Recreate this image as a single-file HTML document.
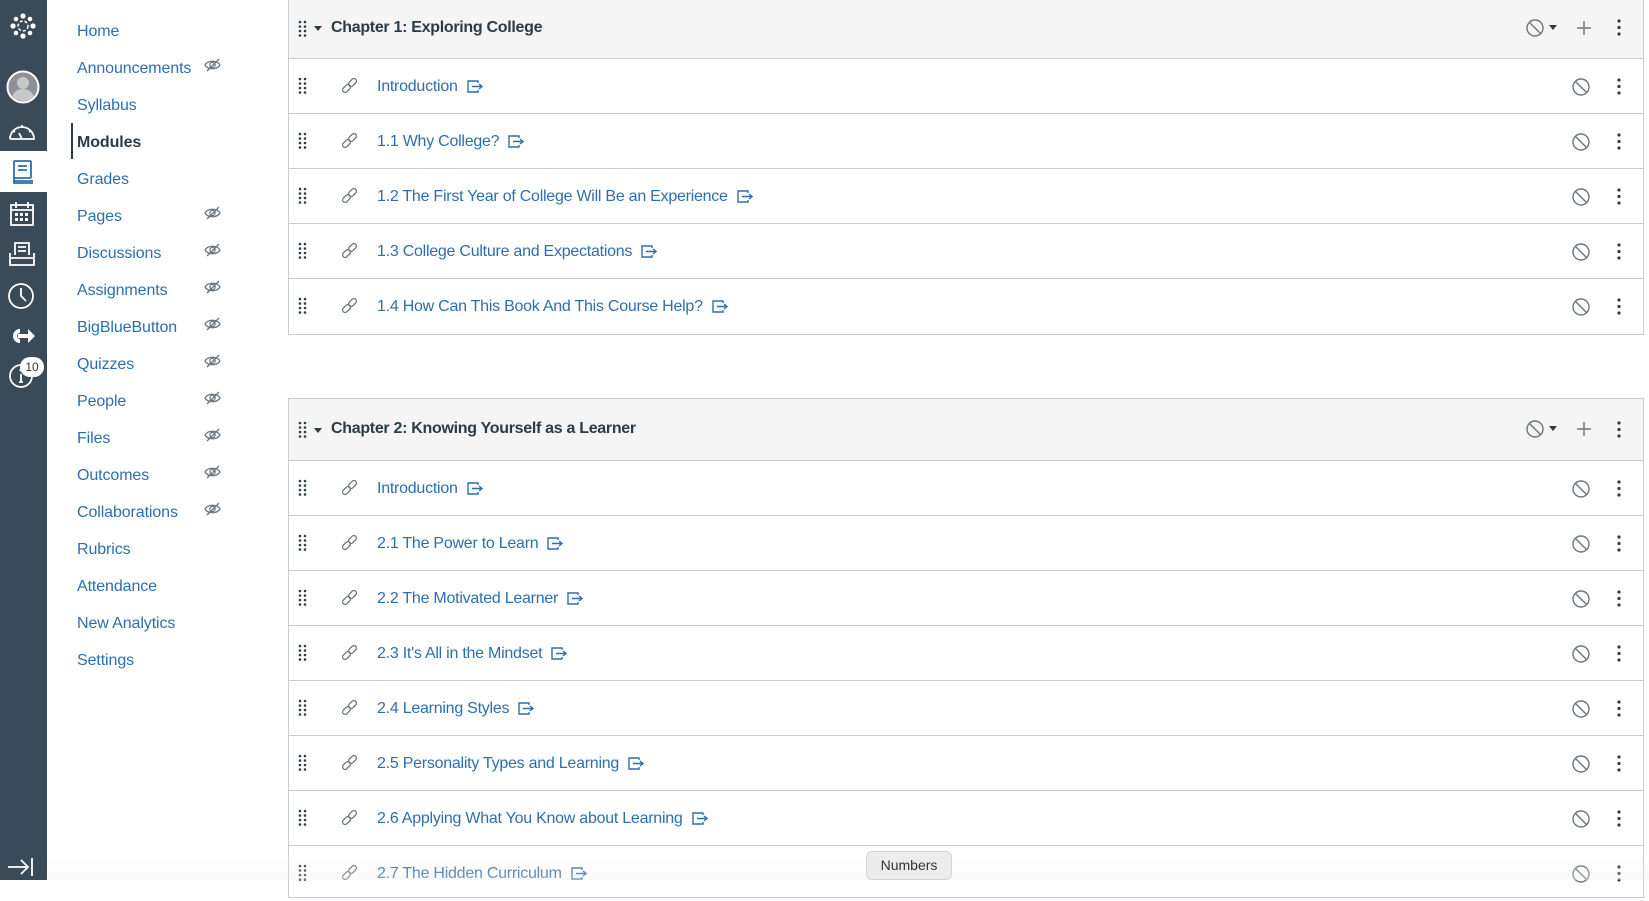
<!DOCTYPE html>
<html><head><meta charset="utf-8"><style>
*{margin:0;padding:0;box-sizing:border-box}
body{width:1649px;height:880px;overflow:hidden;background:#fff;font-family:"Liberation Sans",sans-serif;position:relative}
#gn{position:absolute;left:0;top:0;width:47px;height:880px;background:#394b58}
#gn .act{position:absolute;left:0;top:151px;width:47px;height:41px;background:#fff}
#gn svg{position:absolute}
.nav a{position:absolute;left:77px;font-size:16px;color:#2d6fad;text-decoration:none;white-space:nowrap;letter-spacing:-0.1px}
.nav .eye{position:absolute;left:204px}
.nav .cur{color:#2d3b45;font-weight:bold}
.bar{position:absolute;left:71px;top:123px;width:2px;height:36px;background:#2d3b45}
.box{position:absolute;left:288px;width:1356px;border:1px solid #c7cdd1;border-top:none}
.hd{height:59px;background:#f5f5f5;border-bottom:1px solid #c7cdd1;position:relative}
.hd .t{position:absolute;left:42px;top:19px;font-size:16px;color:#2d3b45;font-weight:bold;letter-spacing:-0.3px}
.row{height:55px;border-bottom:1px solid #c7cdd1;position:relative}
.row:last-child{border-bottom:none}
.row .t{position:absolute;left:88px;top:19px;font-size:16px;color:#2d6fad;white-space:nowrap;letter-spacing:-0.25px}
.row .t svg{vertical-align:-3px;margin-left:8px}
.dr{position:absolute;left:9px;top:18px}
.hd .dr{top:20px}
.lk{position:absolute;left:51px;top:18px}
.ban{position:absolute;left:1282px;top:18px}
.keb{position:absolute;left:1328px;top:18px}
.caret{position:absolute;left:25px;top:26px;width:0;height:0;border-left:4px solid transparent;border-right:4px solid transparent;border-top:5px solid #2d3b45}
</style></head><body>
<svg width="0" height="0" style="position:absolute"><defs>
<g id="drag"><g fill="#2d3b45"><circle cx="2" cy="2" r="1.3"/><circle cx="7" cy="2" r="1.3"/><circle cx="2" cy="6.5" r="1.3"/><circle cx="7" cy="6.5" r="1.3"/><circle cx="2" cy="11" r="1.3"/><circle cx="7" cy="11" r="1.3"/><circle cx="2" cy="15.5" r="1.3"/><circle cx="7" cy="15.5" r="1.3"/></g></g>
<g id="link"><g fill="none" stroke="#6b7780" stroke-width="1.3"><rect x="2" y="9" width="9" height="5" rx="2.5" transform="rotate(-45 6.5 11.5)"/><rect x="8" y="3" width="9" height="5" rx="2.5" transform="rotate(-45 12.5 5.5)"/></g></g>
<g id="ext"><g fill="none" stroke="#2d6fad" stroke-width="1.4"><path d="M12 4V2H2v11h10v-2"/><path d="M6 7.5h10M13 5l3 2.5-3 2.5"/></g></g>
<g id="ban"><g fill="none" stroke="#6b7780" stroke-width="1.4"><circle cx="10" cy="10" r="8"/><path d="M4.5 4.5l11 11"/></g></g>
<g id="keb"><g fill="#2d3b45"><circle cx="2" cy="3" r="1.6"/><circle cx="2" cy="9.5" r="1.6"/><circle cx="2" cy="16" r="1.6"/></g></g>
<g id="eye"><g fill="none" stroke="#6b7780" stroke-width="1.3"><path d="M1 7c3-5 12-5 15 0c-3 5-12 5-15 0z"/><circle cx="8.5" cy="7" r="2.6"/><path d="M3 13L15 1"/></g></g>
</defs></svg>

<div id="gn">
<div class="act"></div>
<svg style="left:9px;top:12px" width="28" height="28" viewBox="0 0 28 28"><g fill="#fff"><circle cx="14" cy="4" r="2.6"/><circle cx="14" cy="24" r="2.6"/><circle cx="4" cy="14" r="2.6"/><circle cx="24" cy="14" r="2.6"/><circle cx="7" cy="7" r="2.3"/><circle cx="21" cy="7" r="2.3"/><circle cx="7" cy="21" r="2.3"/><circle cx="21" cy="21" r="2.3"/></g><circle cx="14" cy="14" r="5" fill="none" stroke="#fff" stroke-width="1.5" stroke-dasharray="3 2"/></svg>
<svg style="left:6px;top:70px" width="34" height="34" viewBox="0 0 34 34"><circle cx="17" cy="17" r="15.5" fill="#8c9297" stroke="#fff" stroke-width="2"/><circle cx="17" cy="13" r="6" fill="#c8c8c8"/><path d="M6 27c2-6 6-8 11-8s9 2 11 8c-3 3-7 4-11 4s-8-1-11-4z" fill="#c8c8c8"/></svg>
<svg style="left:7px;top:120px" width="30" height="22" viewBox="0 0 30 22"><g fill="none" stroke="#fff" stroke-width="1.8"><path d="M3 19A12 12 0 1 1 27 19H3"/><path d="M15 19l-3-6M6 11l2 1M24 11l-2 1M15 5v2"/></g></svg>
<svg style="left:11px;top:159px" width="24" height="26" viewBox="0 0 24 26"><g fill="none" stroke="#2d6fad" stroke-width="1.8"><rect x="3" y="2" width="17" height="17" rx="1"/><path d="M7 7h9M7 11h9M2 22h20M3 19v5h19"/></g></svg>
<svg style="left:9px;top:201px" width="26" height="26" viewBox="0 0 26 26"><g fill="none" stroke="#fff" stroke-width="1.8"><rect x="2" y="4" width="22" height="20"/><path d="M2 9h22M7 1v6M19 1v6"/></g><g fill="#fff"><rect x="6" y="12" width="3" height="3"/><rect x="11" y="12" width="3" height="3"/><rect x="16" y="12" width="3" height="3"/><rect x="6" y="17" width="3" height="3"/><rect x="11" y="17" width="3" height="3"/><rect x="16" y="17" width="3" height="3"/></g></svg>
<svg style="left:8px;top:241px" width="28" height="26" viewBox="0 0 28 26"><g fill="none" stroke="#fff" stroke-width="1.8"><path d="M7 14V2h14v12M10 6h8M10 10h8"/><path d="M2 12v12h24V12M2 17h24"/></g></svg>
<svg style="left:7px;top:282px" width="28" height="28" viewBox="0 0 28 28"><g fill="none" stroke="#fff" stroke-width="1.8"><circle cx="14" cy="14" r="12"/><path d="M14 6v8l5 5"/></g></svg>
<svg style="left:8px;top:325px" width="28" height="22" viewBox="0 0 28 22"><g fill="#fff"><path d="M12 4a7 7 0 1 0 0 14v-4a3 3 0 1 1 0-6z"/><path d="M10 9h10V4l7 7-7 7v-5H10z"/></g></svg>
<svg style="left:8px;top:363px" width="26" height="26" viewBox="0 0 26 26"><g fill="none" stroke="#fff" stroke-width="1.8"><circle cx="13" cy="13" r="11"/><path d="M13 11v8M11 19h4"/></g><circle cx="13" cy="7" r="1.5" fill="#fff"/></svg>
<div style="position:absolute;left:20px;top:357px;width:24px;height:20px;border-radius:10px;background:#fff;color:#2d3b45;font-size:12px;text-align:center;line-height:20px">10</div>
<svg style="left:7px;top:857px" width="28" height="20" viewBox="0 0 28 20"><g fill="none" stroke="#fff" stroke-width="1.8"><path d="M1 10h20M14 3l7 7-7 7M25 1v18"/></g></svg>
</div>

<div class="nav">
<div class="bar"></div>
<a style="top:23px">Home</a>
<a style="top:60px">Announcements</a><svg class="eye" style="top:58px" width="17" height="14"><use href="#eye"/></svg>
<a style="top:97px">Syllabus</a>
<a class="cur" style="top:134px">Modules</a>
<a style="top:171px">Grades</a>
<a style="top:208px">Pages</a><svg class="eye" style="top:206px" width="17" height="14"><use href="#eye"/></svg>
<a style="top:245px">Discussions</a><svg class="eye" style="top:243px" width="17" height="14"><use href="#eye"/></svg>
<a style="top:282px">Assignments</a><svg class="eye" style="top:280px" width="17" height="14"><use href="#eye"/></svg>
<a style="top:319px">BigBlueButton</a><svg class="eye" style="top:317px" width="17" height="14"><use href="#eye"/></svg>
<a style="top:356px">Quizzes</a><svg class="eye" style="top:354px" width="17" height="14"><use href="#eye"/></svg>
<a style="top:393px">People</a><svg class="eye" style="top:391px" width="17" height="14"><use href="#eye"/></svg>
<a style="top:430px">Files</a><svg class="eye" style="top:428px" width="17" height="14"><use href="#eye"/></svg>
<a style="top:467px">Outcomes</a><svg class="eye" style="top:465px" width="17" height="14"><use href="#eye"/></svg>
<a style="top:504px">Collaborations</a><svg class="eye" style="top:502px" width="17" height="14"><use href="#eye"/></svg>
<a style="top:541px">Rubrics</a>
<a style="top:578px">Attendance</a>
<a style="top:615px">New Analytics</a>
<a style="top:652px">Settings</a>
</div>

<div class="box" style="top:0">
<div class="hd"><svg class="dr" width="9" height="18"><use href="#drag"/></svg><div class="caret"></div><div class="t">Chapter 1: Exploring College</div>
<svg style="position:absolute;left:1236px;top:18px" width="20" height="20"><use href="#ban"/></svg><div class="caret" style="left:1260px;top:25px"></div>
<svg style="position:absolute;left:1287px;top:20px" width="16" height="16"><path d="M8 1v14M1 8h14" stroke="#6b7780" stroke-width="1.4"/></svg>
<svg class="keb" width="4" height="19"><use href="#keb"/></svg></div>
<div class="row"><svg class="dr" width="9" height="18"><use href="#drag"/></svg><svg class="lk" width="19" height="19"><use href="#link"/></svg><div class="t">Introduction<svg width="17" height="15"><use href="#ext"/></svg></div><svg class="ban" width="20" height="20"><use href="#ban"/></svg><svg class="keb" width="4" height="19"><use href="#keb"/></svg></div>
<div class="row"><svg class="dr" width="9" height="18"><use href="#drag"/></svg><svg class="lk" width="19" height="19"><use href="#link"/></svg><div class="t">1.1 Why College?<svg width="17" height="15"><use href="#ext"/></svg></div><svg class="ban" width="20" height="20"><use href="#ban"/></svg><svg class="keb" width="4" height="19"><use href="#keb"/></svg></div>
<div class="row"><svg class="dr" width="9" height="18"><use href="#drag"/></svg><svg class="lk" width="19" height="19"><use href="#link"/></svg><div class="t">1.2 The First Year of College Will Be an Experience<svg width="17" height="15"><use href="#ext"/></svg></div><svg class="ban" width="20" height="20"><use href="#ban"/></svg><svg class="keb" width="4" height="19"><use href="#keb"/></svg></div>
<div class="row"><svg class="dr" width="9" height="18"><use href="#drag"/></svg><svg class="lk" width="19" height="19"><use href="#link"/></svg><div class="t">1.3 College Culture and Expectations<svg width="17" height="15"><use href="#ext"/></svg></div><svg class="ban" width="20" height="20"><use href="#ban"/></svg><svg class="keb" width="4" height="19"><use href="#keb"/></svg></div>
<div class="row"><svg class="dr" width="9" height="18"><use href="#drag"/></svg><svg class="lk" width="19" height="19"><use href="#link"/></svg><div class="t">1.4 How Can This Book And This Course Help?<svg width="17" height="15"><use href="#ext"/></svg></div><svg class="ban" width="20" height="20"><use href="#ban"/></svg><svg class="keb" width="4" height="19"><use href="#keb"/></svg></div>
</div>

<div class="box" style="top:398px;border-top:1px solid #c7cdd1;height:500px">
<div class="hd" style="height:62px"><svg class="dr" width="9" height="18" style="top:22px"><use href="#drag"/></svg><div class="caret" style="top:29px"></div><div class="t" style="top:21px">Chapter 2: Knowing Yourself as a Learner</div>
<svg style="position:absolute;left:1236px;top:20px" width="20" height="20"><use href="#ban"/></svg><div class="caret" style="left:1260px;top:27px"></div>
<svg style="position:absolute;left:1287px;top:22px" width="16" height="16"><path d="M8 1v14M1 8h14" stroke="#6b7780" stroke-width="1.4"/></svg>
<svg class="keb" width="4" height="19" style="top:21px"><use href="#keb"/></svg></div>
<div class="row"><svg class="dr" width="9" height="18"><use href="#drag"/></svg><svg class="lk" width="19" height="19"><use href="#link"/></svg><div class="t">Introduction<svg width="17" height="15"><use href="#ext"/></svg></div><svg class="ban" width="20" height="20"><use href="#ban"/></svg><svg class="keb" width="4" height="19"><use href="#keb"/></svg></div>
<div class="row"><svg class="dr" width="9" height="18"><use href="#drag"/></svg><svg class="lk" width="19" height="19"><use href="#link"/></svg><div class="t">2.1 The Power to Learn<svg width="17" height="15"><use href="#ext"/></svg></div><svg class="ban" width="20" height="20"><use href="#ban"/></svg><svg class="keb" width="4" height="19"><use href="#keb"/></svg></div>
<div class="row"><svg class="dr" width="9" height="18"><use href="#drag"/></svg><svg class="lk" width="19" height="19"><use href="#link"/></svg><div class="t">2.2 The Motivated Learner<svg width="17" height="15"><use href="#ext"/></svg></div><svg class="ban" width="20" height="20"><use href="#ban"/></svg><svg class="keb" width="4" height="19"><use href="#keb"/></svg></div>
<div class="row"><svg class="dr" width="9" height="18"><use href="#drag"/></svg><svg class="lk" width="19" height="19"><use href="#link"/></svg><div class="t">2.3 It's All in the Mindset<svg width="17" height="15"><use href="#ext"/></svg></div><svg class="ban" width="20" height="20"><use href="#ban"/></svg><svg class="keb" width="4" height="19"><use href="#keb"/></svg></div>
<div class="row"><svg class="dr" width="9" height="18"><use href="#drag"/></svg><svg class="lk" width="19" height="19"><use href="#link"/></svg><div class="t">2.4 Learning Styles<svg width="17" height="15"><use href="#ext"/></svg></div><svg class="ban" width="20" height="20"><use href="#ban"/></svg><svg class="keb" width="4" height="19"><use href="#keb"/></svg></div>
<div class="row"><svg class="dr" width="9" height="18"><use href="#drag"/></svg><svg class="lk" width="19" height="19"><use href="#link"/></svg><div class="t">2.5 Personality Types and Learning<svg width="17" height="15"><use href="#ext"/></svg></div><svg class="ban" width="20" height="20"><use href="#ban"/></svg><svg class="keb" width="4" height="19"><use href="#keb"/></svg></div>
<div class="row"><svg class="dr" width="9" height="18"><use href="#drag"/></svg><svg class="lk" width="19" height="19"><use href="#link"/></svg><div class="t">2.6 Applying What You Know about Learning<svg width="17" height="15"><use href="#ext"/></svg></div><svg class="ban" width="20" height="20"><use href="#ban"/></svg><svg class="keb" width="4" height="19"><use href="#keb"/></svg></div>
<div class="row"><svg class="dr" width="9" height="18"><use href="#drag"/></svg><svg class="lk" width="19" height="19"><use href="#link"/></svg><div class="t">2.7 The Hidden Curriculum<svg width="17" height="15"><use href="#ext"/></svg></div><svg class="ban" width="20" height="20"><use href="#ban"/></svg><svg class="keb" width="4" height="19"><use href="#keb"/></svg></div>
</div>

<div style="position:absolute;left:47px;top:855px;width:1602px;height:25px;background:linear-gradient(rgba(245,245,245,0),rgba(240,240,240,0.35))"></div>
<div style="position:absolute;left:866px;top:851px;width:86px;height:29px;background:#ececec;border:1px solid #d4d4d4;border-radius:6px;font-size:14px;color:#333;text-align:center;line-height:26px">Numbers</div>
</body></html>
